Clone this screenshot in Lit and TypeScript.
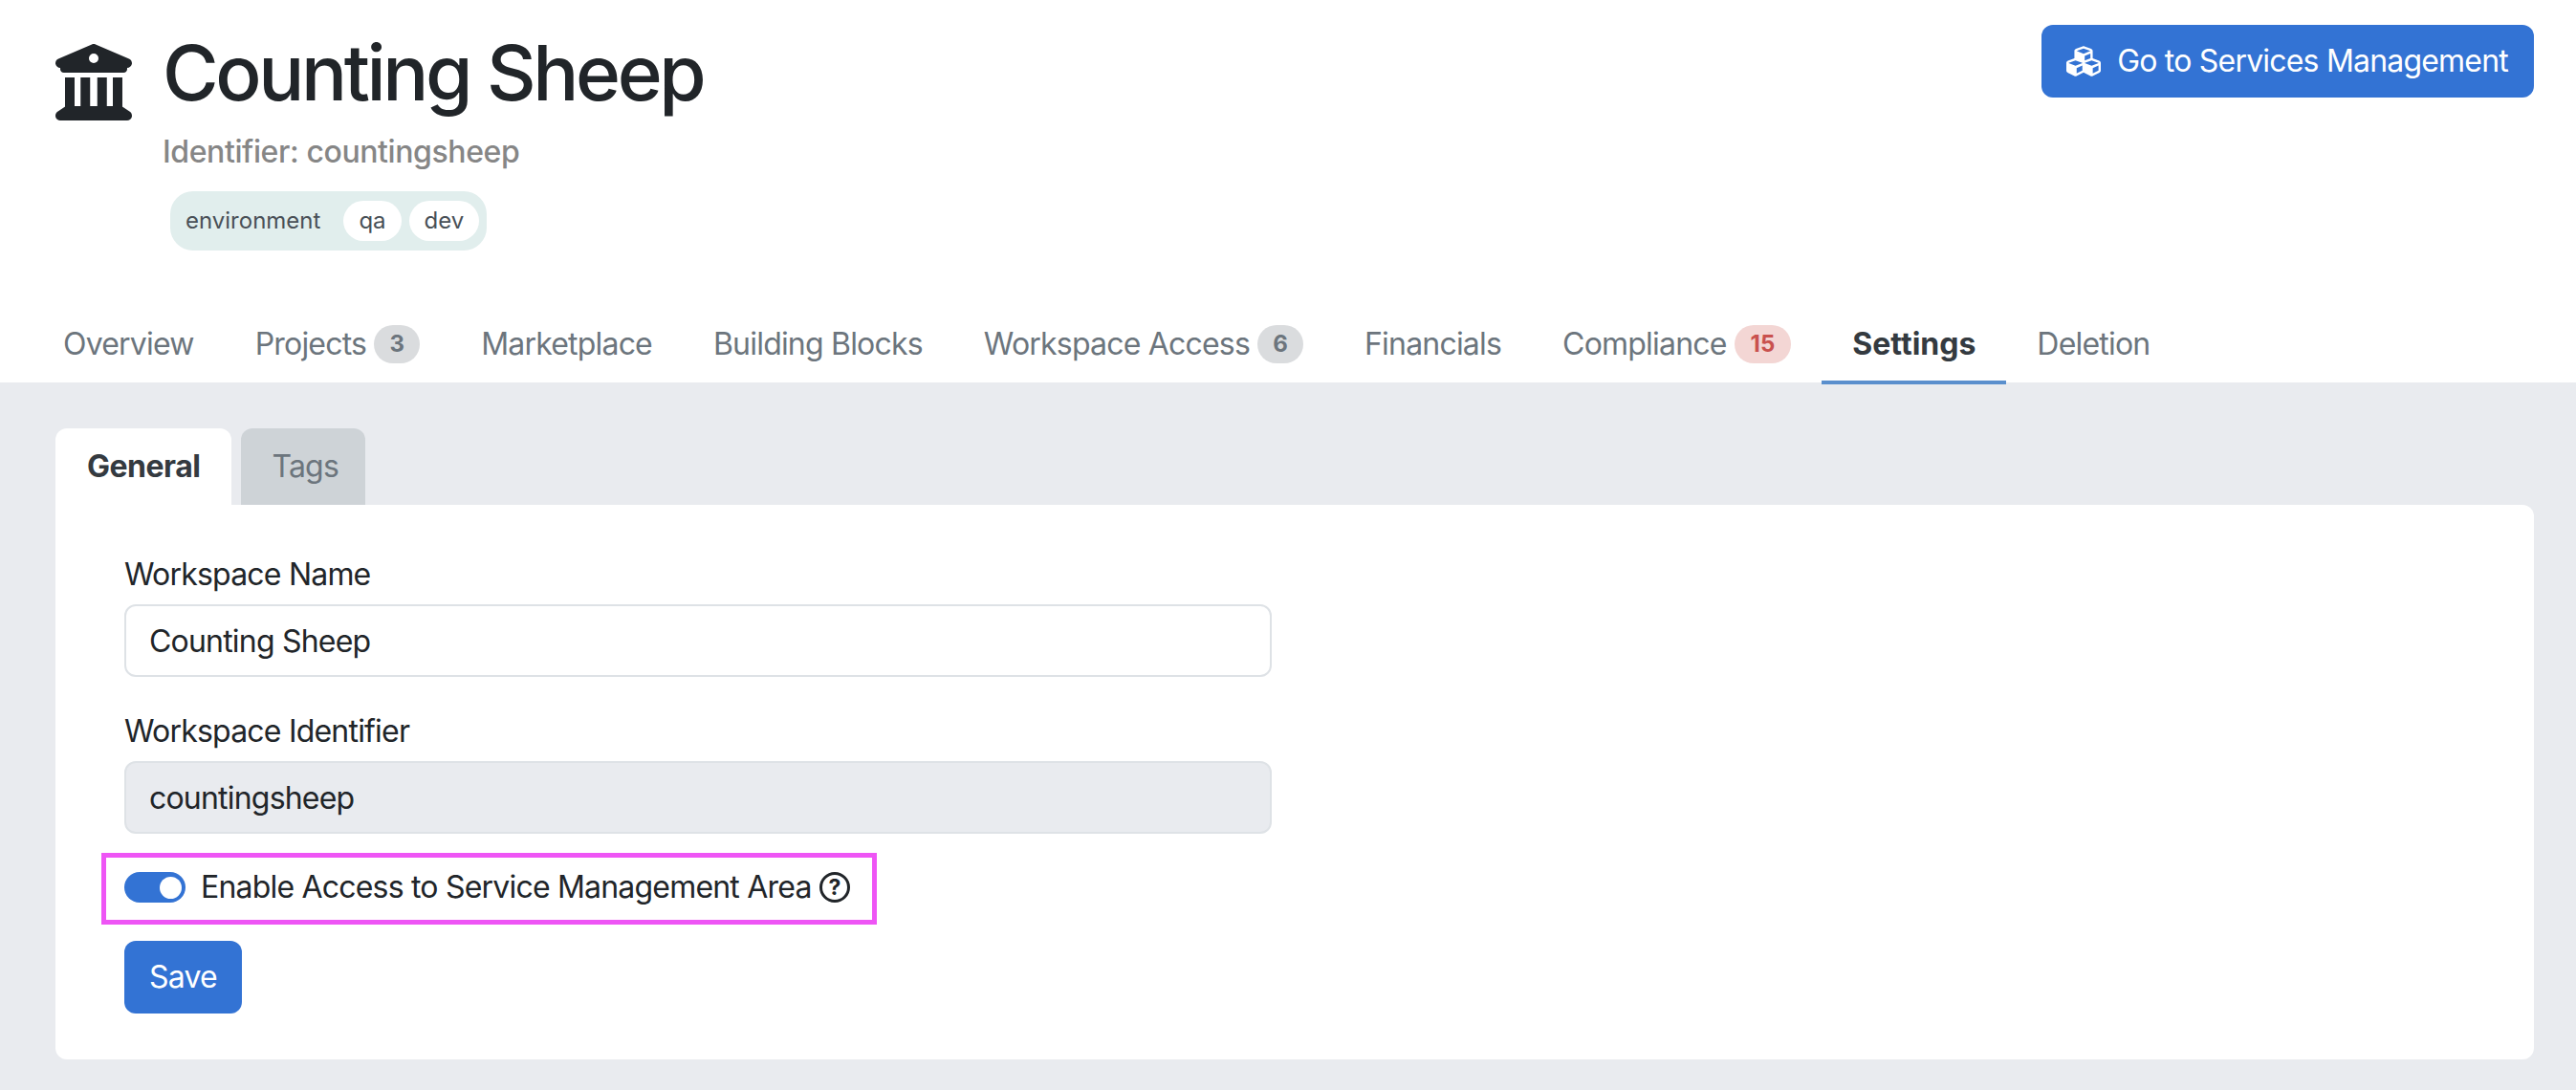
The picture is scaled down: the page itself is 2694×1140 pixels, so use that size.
import { LitElement, html, css } from 'lit';
import { customElement } from 'lit/decorators.js';

const NAV_ITEMS = [
  { label: 'Overview' },
  { label: 'Projects', badge: '3' },
  { label: 'Marketplace' },
  { label: 'Building Blocks' },
  { label: 'Workspace Access', badge: '6' },
  { label: 'Financials' },
  { label: 'Compliance', badge: '15', danger: true },
  { label: 'Settings', active: true },
  { label: 'Deletion' },
];

@customElement('app-root')
export class AppRoot extends LitElement {
  static styles = css`
    :host {
      display: block;
      min-height: 1140px;
      background: #e9ebef;
      font-family: Inter, 'Liberation Sans', sans-serif;
      font-size: 32px;
      line-height: 48px;
      letter-spacing: -0.8px;
      color: #212529;
    }

    .header {
      background: #fff;
      height: 400px;
      display: flex;
      flex-direction: column;
      box-sizing: border-box;
      padding-top: 26px;
    }

    .header__top {
      flex: 1;
      display: flex;
      justify-content: space-between;
      align-items: flex-start;
      padding: 0 44px 0 58px;
    }

    .header__brand {
      display: flex;
      align-items: flex-start;
    }

    .header__icon {
      width: 80px;
      height: 80px;
      margin: 20px 32px 0 0;
      fill: #212529;
    }

    .header__title {
      margin: 2px 0 0;
      font-size: 80px;
      line-height: 96px;
      font-weight: 500;
      letter-spacing: -3.4px;
    }

    .header__identifier {
      margin-top: 11px;
      font-weight: 500;
      letter-spacing: -0.4px;
      color: #868686;
    }

    .tags {
      display: inline-flex;
      align-items: center;
      margin: 17px 0 0 8px;
      height: 62px;
      padding: 0 8px 0 16px;
      border-radius: 24px;
      background: #e1eeed;
      font-size: 24px;
      letter-spacing: 0;
      color: #495057;
    }

    .tags__name {
      margin-right: 24px;
    }

    .tags__value {
      height: 42px;
      line-height: 42px;
      padding: 0 16px;
      margin-left: 8px;
      border-radius: 21px;
      background: #fff;
    }

    .tags__name + .tags__value {
      margin-left: 0;
    }

    .btn {
      display: inline-flex;
      align-items: center;
      height: 76px;
      border: 0;
      border-radius: 12px;
      background: #3373d4;
      color: #fff;
      font: inherit;
      letter-spacing: inherit;
    }

    .btn--services {
      padding: 0 27px 0 26px;
    }

    .btn--services svg {
      width: 36px;
      height: 36px;
      margin-right: 17px;
      fill: #fff;
    }

    .btn--save {
      padding: 0 26px;
    }

    .nav {
      display: flex;
      padding-left: 34px;
    }

    .nav__item {
      display: flex;
      align-items: center;
      height: 80px;
      padding: 0 32px;
      color: #6c757d;
    }

    .nav__item--active {
      position: relative;
      font-weight: 700;
      letter-spacing: 0;
      color: #343a40;
    }

    .nav__item--active::after {
      content: '';
      position: absolute;
      left: 0;
      right: 0;
      top: 78px;
      height: 4px;
      background: #5a8fcd;
    }

    .nav__badge {
      min-width: 48px;
      box-sizing: border-box;
      height: 40px;
      line-height: 40px;
      margin-left: 8px;
      padding: 0 14px;
      border-radius: 20px;
      background: #dadcde;
      font-size: 24px;
      font-weight: 700;
      letter-spacing: 0;
      text-align: center;
    }

    .nav__badge--danger {
      padding: 0 17px;
      background: #f3d6d4;
      color: #c9514e;
    }

    .main {
      padding: 48px 44px 32px 58px;
    }

    .subtabs {
      display: flex;
      gap: 10px;
    }

    .subtabs__item {
      height: 80px;
      line-height: 80px;
      padding: 0 28px 0 32px;
      border-radius: 12px 12px 0 0;
      background: #ced3d7;
      color: #6c757d;
    }

    .subtabs__item--active {
      padding: 0 33px;
      background: #fff;
      font-weight: 700;
      letter-spacing: -0.5px;
      color: #343a40;
    }

    .card {
      height: 580px;
      box-sizing: border-box;
      padding: 49px 72px;
      background: #fff;
      border-radius: 0 12px 12px 12px;
    }

    .field {
      width: 1200px;
      margin-bottom: 33px;
    }

    .field__label {
      display: block;
      margin-bottom: 7px;
    }

    .field__input {
      display: block;
      box-sizing: border-box;
      width: 100%;
      height: 76px;
      padding: 0 24px;
      border: 2px solid #dee2e6;
      border-radius: 12px;
      background: #fff;
      font: inherit;
      letter-spacing: inherit;
      color: #212529;
    }

    .field__input:disabled {
      background: #e9ebef;
      opacity: 1;
    }

    .switch-row {
      position: relative;
      display: flex;
      align-items: center;
      height: 48px;
      margin: -1px 0 32px;
    }

    .switch-row::after {
      content: '';
      position: absolute;
      left: -24px;
      top: -12px;
      width: 811px;
      height: 75px;
      box-sizing: border-box;
      border: 5px solid #ee55f5;
    }

    .switch {
      display: flex;
      justify-content: flex-end;
      align-items: center;
      box-sizing: border-box;
      width: 64px;
      height: 32px;
      padding-right: 4px;
      margin-right: 16px;
      border-radius: 16px;
      background: #3373d4;
    }

    .switch__knob {
      width: 23px;
      height: 23px;
      border-radius: 50%;
      background: #fff;
    }

    .help {
      width: 32px;
      height: 32px;
      margin-left: 8px;
    }

    .help circle {
      fill: none;
      stroke: #212529;
      stroke-width: 3;
    }

    .help text {
      font-size: 23px;
      font-weight: 700;
      letter-spacing: 0;
      fill: #212529;
      text-anchor: middle;
    }
  `;

  render() {
    return html`
      <header class="header">
        <div class="header__top">
          <div class="header__brand">
            <svg class="header__icon" viewBox="0 0 512 512"><path d="M243.4 2.6l-224 96c-14 6-21.8 21-18.7 35.8S16.8 160 32 160v8c0 13.3 10.7 24 24 24H456c13.3 0 24-10.7 24-24v-8c15.2 0 28.3-10.7 31.3-25.6s-4.8-29.9-18.7-35.8l-224-96c-8-3.4-17.2-3.4-25.2 0zM128 224H64V420.3c-.6 .3-1.2 .7-1.8 1.1l-48 32c-11.7 7.8-17 22.4-12.9 35.9S17.9 512 32 512H480c14.1 0 26.5-9.2 30.6-22.7s-1.1-28.1-12.9-35.9l-48-32c-.6-.4-1.2-.7-1.8-1.1V224H384V416H344V224H280V416H232V224H168V416H128V224zM256 64a32 32 0 1 1 0 64 32 32 0 1 1 0-64z"/></svg>
            <div>
              <h1 class="header__title">Counting Sheep</h1>
              <div class="header__identifier">Identifier: countingsheep</div>
              <div class="tags">
                <span class="tags__name">environment</span>
                <span class="tags__value">qa</span>
                <span class="tags__value">dev</span>
              </div>
            </div>
          </div>
          <button class="btn btn--services">
            <svg viewBox="0 0 512 512"><path d="M488.6 250.2L392 214V105.5c0-15-9.3-28.4-23.4-33.7l-100-37.5c-8.1-3.1-17.1-3.1-25.3 0l-100 37.5c-14.1 5.3-23.4 18.7-23.4 33.7V214l-96.6 36.2C9.3 255.5 0 268.9 0 283.9V394c0 13.6 7.7 26.1 19.9 32.2l100 50c10.1 5.1 22.1 5.1 32.2 0l103.9-52 103.9 52c10.1 5.1 22.1 5.1 32.2 0l100-50c12.2-6.1 19.9-18.6 19.9-32.2V283.9c0-15-9.3-28.4-23.4-33.7zM358 214.8l-85 31.9v-68.2l85-37v73.3zM154 104.1l102-38.2 102 38.2v.6l-102 41.4-102-41.4v-.6zm84 291.1l-85 42.5v-79.1l85-38.8v75.4zm0-112l-102 41.4-102-41.4v-.6l102-38.2 102 38.2v.6zm240 112l-85 42.5v-79.1l85-38.8v75.4zm0-112l-102 41.4-102-41.4v-.6l102-38.2 102 38.2v.6z"/></svg>
            Go to Services Management
          </button>
        </div>
        <nav class="nav">
          ${NAV_ITEMS.map(
            (item) => html`
              <div class="nav__item ${item.active ? 'nav__item--active' : ''}">
                ${item.label}
                ${item.badge
                  ? html`<span class="nav__badge ${item.danger ? 'nav__badge--danger' : ''}">${item.badge}</span>`
                  : ''}
              </div>
            `
          )}
        </nav>
      </header>
      <main class="main">
        <div class="subtabs">
          <div class="subtabs__item subtabs__item--active">General</div>
          <div class="subtabs__item">Tags</div>
        </div>
        <section class="card">
          <div class="field">
            <label class="field__label">Workspace Name</label>
            <input class="field__input" .value=${'Counting Sheep'} />
          </div>
          <div class="field">
            <label class="field__label">Workspace Identifier</label>
            <input class="field__input" disabled .value=${'countingsheep'} />
          </div>
          <div class="switch-row">
            <div class="switch"><div class="switch__knob"></div></div>
            Enable Access to Service Management Area
            <svg class="help" viewBox="0 0 32 32">
              <circle cx="16" cy="16" r="14.5"></circle>
              <text x="16" y="24">?</text>
            </svg>
          </div>
          <button class="btn btn--save">Save</button>
        </section>
      </main>
    `;
  }
}
